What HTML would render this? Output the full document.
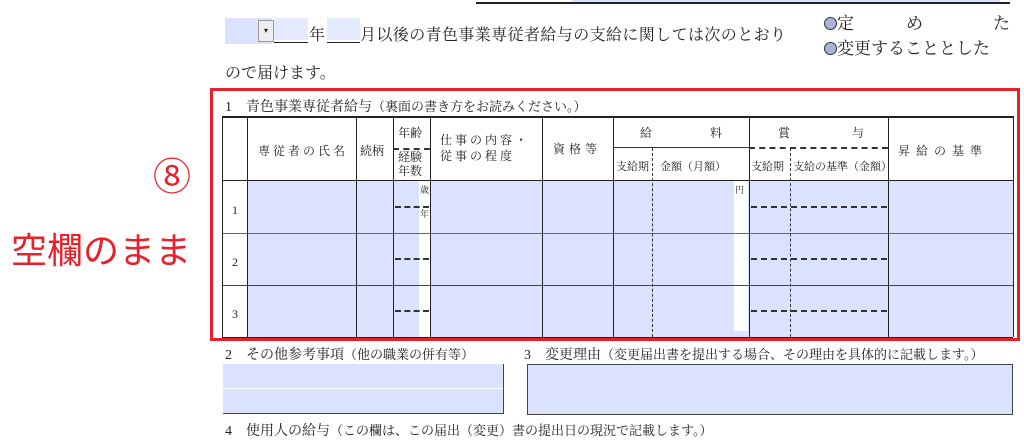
<!DOCTYPE html>
<html><head><meta charset="utf-8"><style>
body{margin:0;width:1024px;height:432px;background:#fff;position:relative;overflow:hidden;font-family:"Liberation Serif","Noto Serif CJK SC","Noto Sans CJK JP",serif;color:#222}
.a{position:absolute;white-space:nowrap}
.f{position:absolute;background:#dbe2fe}
.v{position:absolute;width:1px;background:#222}
.h{position:absolute;height:1px;background:#222}
.dh{position:absolute;height:0;border-top:2px dashed #333}
.dv{position:absolute;width:0;border-left:1px dashed #333}
.s{font-size:12px}
</style></head><body>
<div class="h" style="left:476px;top:2px;width:534px;height:2px"></div>
<div class="f" style="left:572px;top:0;width:200px;height:2px"></div>
<div class="f" style="left:600px;top:0;width:400px;height:2px"></div>
<div class="f" style="left:225px;top:18px;width:47px;height:26px"></div>
<div class="a" style="left:258px;top:20px;width:14px;height:20px;background:#eee;border:1px solid #999;font-size:8px;text-align:center;line-height:20px">▾</div>
<div class="f" style="left:274px;top:18px;width:34px;height:22px;background:#e4e9fe"></div>
<div class="f" style="left:327px;top:18px;width:33px;height:22px;background:#e4e9fe"></div>
<div class="h" style="left:274px;top:42px;width:34px"></div>
<div class="h" style="left:327px;top:42px;width:33px"></div>
<div class="a" style="left:309px;top:22px;font-size:16px">年</div>
<div class="a" style="left:360px;top:22px;font-size:16px;letter-spacing:0.4px">月以後の青色事業専従者給与の支給に関しては次のとおり</div>
<div class="a" style="left:225px;top:60px;font-size:16px">ので届けます。</div>
<div class="a" style="left:824px;top:9px;font-size:17px"><span style="display:inline-block;width:11px;height:11px;border-radius:50%;border:1.5px solid #333;background:#a8b4d8;vertical-align:-1px"></span>定<span style="margin-left:52px">め</span><span style="margin-left:70px">た</span></div>
<div class="a" style="left:824px;top:34px;font-size:17px"><span style="display:inline-block;width:11px;height:11px;border-radius:50%;border:1.5px solid #333;background:#a8b4d8;vertical-align:-1px"></span>変更することとした</div>
<div class="a" style="left:153px;top:146px;font-size:38px;color:#e8202a;font-family:'Noto Sans CJK JP',sans-serif">⑧</div>
<div class="a" style="left:11px;top:222px;font-size:36px;color:#e8202a;font-family:'Noto Sans CJK JP',sans-serif">空欄のまま</div>
<div class="a" style="left:210px;top:88px;width:804px;height:247px;border:3px solid #e8202a"></div>
<div class="a" style="left:225px;top:96px;font-size:14px">1　青色事業専従者給与<span style="font-size:13px">（裏面の書き方をお読みください。）</span></div>
<div class="f" style="left:247px;top:181px;width:766px;height:156px"></div>
<div class="a" style="left:419px;top:181px;width:11px;height:156px;background:#fff"></div>
<div class="a" style="left:734px;top:181px;width:14px;height:150px;background:#fff"></div>
<div class="h" style="left:222px;top:116px;width:791px;height:1.5px"></div>
<div class="h" style="left:222px;top:180px;width:791px"></div>
<div class="h" style="left:222px;top:233px;width:791px;background:#666"></div>
<div class="h" style="left:222px;top:285px;width:791px;background:#444"></div>
<div class="h" style="left:222px;top:337px;width:791px"></div>
<div class="v" style="left:222px;top:116px;height:221px"></div>
<div class="v" style="left:247px;top:116px;height:221px"></div>
<div class="v" style="left:356px;top:116px;height:221px"></div>
<div class="v" style="left:393px;top:116px;height:221px"></div>
<div class="v" style="left:430px;top:116px;height:221px"></div>
<div class="v" style="left:542px;top:116px;height:221px"></div>
<div class="v" style="left:613px;top:116px;height:221px"></div>
<div class="v" style="left:749px;top:116px;height:221px"></div>
<div class="v" style="left:888px;top:116px;height:221px"></div>
<div class="v" style="left:1013px;top:116px;height:221px"></div>
<div class="dv" style="left:652px;top:148px;height:189px"></div>
<div class="dv" style="left:790px;top:148px;height:189px"></div>
<div class="dh" style="left:393px;top:148px;width:37px"></div>
<div class="dh" style="left:613px;top:147px;width:136px;border-top:1.5px solid #333"></div>
<div class="dh" style="left:749px;top:147px;width:139px"></div>
<div class="dh" style="left:395px;top:206px;width:34px"></div>
<div class="dh" style="left:395px;top:258px;width:34px"></div>
<div class="dh" style="left:395px;top:310px;width:34px"></div>
<div class="dh" style="left:751px;top:206px;width:136px"></div>
<div class="dh" style="left:751px;top:258px;width:136px"></div>
<div class="dh" style="left:751px;top:310px;width:136px"></div>
<div class="a s" style="left:258px;top:142px;letter-spacing:3px">専従者の氏名</div>
<div class="a s" style="left:360px;top:142px">続柄</div>
<div class="a s" style="left:398px;top:124px">年齢</div>
<div class="a s" style="left:398px;top:150px;line-height:14px;white-space:normal;width:28px">経験<br>年数</div>
<div class="a s" style="left:440px;top:132px;line-height:16px;letter-spacing:3px">仕事の内容・<br>従事の程度</div>
<div class="a s" style="left:553px;top:140px;letter-spacing:4px">資格等</div>
<div class="a s" style="left:640px;top:124px">給<span style="margin-left:58px">料</span></div>
<div class="a" style="left:616px;top:158px;font-size:11px">支給期</div>
<div class="a" style="left:660px;top:158px;font-size:11px">金額（月額）</div>
<div class="a s" style="left:778px;top:124px">賞<span style="margin-left:62px">与</span></div>
<div class="a" style="left:751px;top:158px;font-size:11px">支給期</div>
<div class="a" style="left:793px;top:158px;font-size:11px">支給の基準（金額）</div>
<div class="a s" style="left:898px;top:142px;letter-spacing:6px">昇給の基準</div>
<div class="a" style="left:420px;top:183px;font-size:9px">歳</div>
<div class="a" style="left:420px;top:207px;font-size:9px">年</div>
<div class="a" style="left:735px;top:183px;font-size:9px">円</div>
<div class="a s" style="left:232px;top:203px">1</div>
<div class="a s" style="left:232px;top:255px">2</div>
<div class="a s" style="left:232px;top:307px">3</div>
<div class="a" style="left:225px;top:344px;font-size:14px">2　その他参考事項<span style="font-size:13px">（他の職業の併有等）</span></div>
<div class="a" style="left:524px;top:344px;font-size:14px">3　変更理由<span style="font-size:13px">（変更届出書を提出する場合、その理由を具体的に記載します。）</span></div>
<div class="f" style="left:223px;top:364px;width:280px;height:49px;border-right:1px solid #444;border-bottom:1px solid #444"></div>
<div class="a" style="left:223px;top:388px;width:280px;height:1px;background:#fff"></div>
<div class="f" style="left:527px;top:364px;width:484px;height:49px;border:1px solid #444"></div>
<div class="a" style="left:225px;top:420px;font-size:14px">4　使用人の給与<span style="font-size:13px">（この欄は、この届出（変更）書の提出日の現況で記載します。）</span></div>
</body></html>
